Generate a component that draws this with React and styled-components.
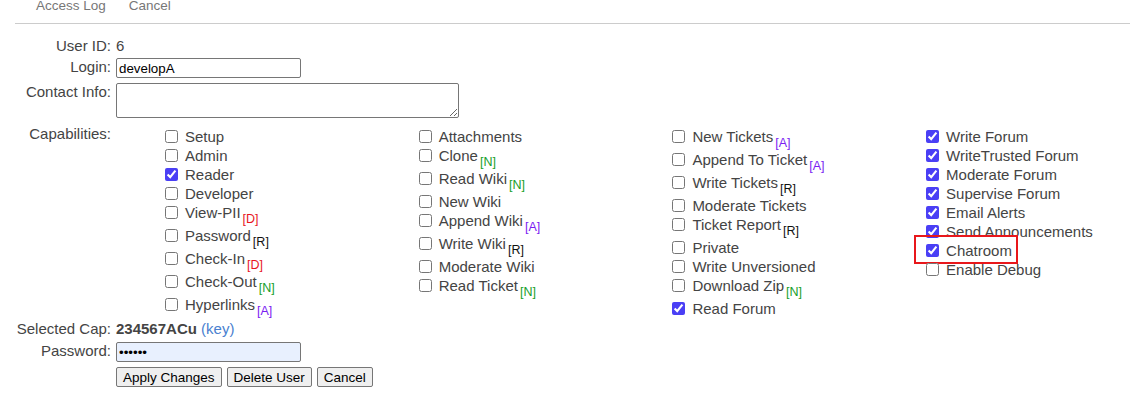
import React from "react";
import styled, { createGlobalStyle } from "styled-components";

const GlobalStyle = createGlobalStyle`
    body {
        margin: 0;
        background: #fff;
        font-family: "Liberation Sans", Arial, sans-serif;
        font-size: 15px;
        color: #444;
    }
`;

const Page = styled.div`
    width: 1130px;
    height: 405px;
    overflow: hidden;
`;

const SubMenu = styled.div`
    display: flex;
    gap: 23px;
    margin-left: 15px;
    margin-top: -3px;
    padding: 0 0 9px 21px;
    border-bottom: 1px solid #ccc;
    font-size: 13.5px;
    line-height: 17px;
    color: #777;
`;

const MenuLink = styled.span`
    color: #777;
`;

const Form = styled.div`
    display: grid;
    grid-template-columns: 111px 1fr;
    column-gap: 5px;
    margin-top: 13px;
`;

const Label = styled.div`
    text-align: right;
    line-height: 18px;
    margin-top: ${(p) => p.$top || 0}px;
`;

const Value = styled.div`
    line-height: 18px;
    margin-top: ${(p) => p.$top || 0}px;
`;

const TextInput = styled.input`
    box-sizing: border-box;
    width: 185px;
    height: 20px;
    padding: 1px 2px;
    border: 1px solid #767676;
    border-radius: 2px;
    font-family: "Liberation Sans", Arial, sans-serif;
    font-size: 13.33px;
    color: #000;
    background: ${(p) => (p.$filled ? "#e8f0fe" : "#fff")};
    display: block;
`;

const TextArea = styled.textarea`
    box-sizing: border-box;
    width: 343px;
    height: 35px;
    border: 1px solid #767676;
    border-radius: 2px;
    resize: both;
    display: block;
`;

const CapGrid = styled.div`
    display: grid;
    grid-template-columns: repeat(4, 253.7px);
    padding-left: 49px;
    margin-top: 2px;
`;

const CapColumn = styled.div`
    display: flex;
    flex-direction: column;
`;

const Item = styled.label`
    position: relative;
    display: flex;
    align-items: flex-start;
    min-height: 19px;
    &::after {
        content: "";
        display: ${(p) => (p.$highlight ? "block" : "none")};
        position: absolute;
        left: -12px;
        top: -6px;
        width: 100px;
        height: 25px;
        border: 2px solid #e8171b;
    }
`;

const Check = styled.input`
    width: 13px;
    height: 13px;
    margin: 3px 7px 0 0;
    accent-color: #4a3ff5;
    flex: none;
`;

const ItemText = styled.span`
    line-height: 19px;
    white-space: nowrap;
`;

const Sub = styled.span`
    font-size: 12.5px;
    line-height: 14px;
    padding-top: 9px;
    margin-left: 2px;
    color: ${(p) => p.$color};
`;

const Bold = styled.b`
    color: #444;
`;

const KeyLink = styled.a`
    color: #4a7fd0;
    text-decoration: none;
`;

const Buttons = styled.div`
    display: flex;
    gap: 5px;
    margin-top: 5px;
`;

const Button = styled.button`
    font-family: "Liberation Sans", Arial, sans-serif;
    font-size: 13.5px;
    height: 20px;
    padding: 0 6px;
    border: 1px solid #767676;
    border-radius: 2px;
    background: #efefef;
    color: #000;
`;

const SUB_COLORS = {
    D: "#e8141e",
    R: "#111",
    N: "#17a02a",
    A: "#7a1cf2",
};

const columns = [
    [
        ["Setup"],
        ["Admin"],
        ["Reader", null, true],
        ["Developer"],
        ["View-PII", "D"],
        ["Password", "R"],
        ["Check-In", "D"],
        ["Check-Out", "N"],
        ["Hyperlinks", "A"],
    ],
    [
        ["Attachments"],
        ["Clone", "N"],
        ["Read Wiki", "N"],
        ["New Wiki"],
        ["Append Wiki", "A"],
        ["Write Wiki", "R"],
        ["Moderate Wiki"],
        ["Read Ticket", "N"],
    ],
    [
        ["New Tickets", "A"],
        ["Append To Ticket", "A"],
        ["Write Tickets", "R"],
        ["Moderate Tickets"],
        ["Ticket Report", "R"],
        ["Private"],
        ["Write Unversioned"],
        ["Download Zip", "N"],
        ["Read Forum", null, true],
    ],
    [
        ["Write Forum", null, true],
        ["WriteTrusted Forum", null, true],
        ["Moderate Forum", null, true],
        ["Supervise Forum", null, true],
        ["Email Alerts", null, true],
        ["Send Announcements", null, true],
        ["Chatroom", null, true, true],
        ["Enable Debug"],
    ],
];

const App = () => {
    return (
        <Page>
            <GlobalStyle />
            <SubMenu>
                <MenuLink>Access Log</MenuLink>
                <MenuLink>Cancel</MenuLink>
            </SubMenu>
            <Form>
                <Label>User ID:</Label>
                <Value>6</Value>

                <Label $top={3}>Login:</Label>
                <Value $top={3}>
                    <TextInput type="text" defaultValue="developA" />
                </Value>

                <Label $top={5}>Contact Info:</Label>
                <Value $top={5}>
                    <TextArea />
                </Value>

                <Label $top={7}>Capabilities:</Label>
                <Value $top={7}>
                    <CapGrid>
                        {columns.map((col, i) => (
                            <CapColumn key={i}>
                                {col.map(([name, sub, checked, hl]) => (
                                    <Item key={name} $highlight={hl}>
                                        <Check
                                            type="checkbox"
                                            defaultChecked={!!checked}
                                        />
                                        <ItemText>{name}</ItemText>
                                        {sub && (
                                            <Sub $color={SUB_COLORS[sub]}>
                                                [{sub}]
                                            </Sub>
                                        )}
                                    </Item>
                                ))}
                            </CapColumn>
                        ))}
                    </CapGrid>
                </Value>

                <Label $top={2}>Selected Cap:</Label>
                <Value $top={2}>
                    <Bold>234567ACu</Bold> <KeyLink href="#">(key)</KeyLink>
                </Value>

                <Label $top={4}>Password:</Label>
                <Value $top={4}>
                    <TextInput $filled type="password" defaultValue="••••••" />
                </Value>

                <div />
                <Buttons>
                    <Button>Apply Changes</Button>
                    <Button>Delete User</Button>
                    <Button>Cancel</Button>
                </Buttons>
            </Form>
        </Page>
    );
};

export default App;
